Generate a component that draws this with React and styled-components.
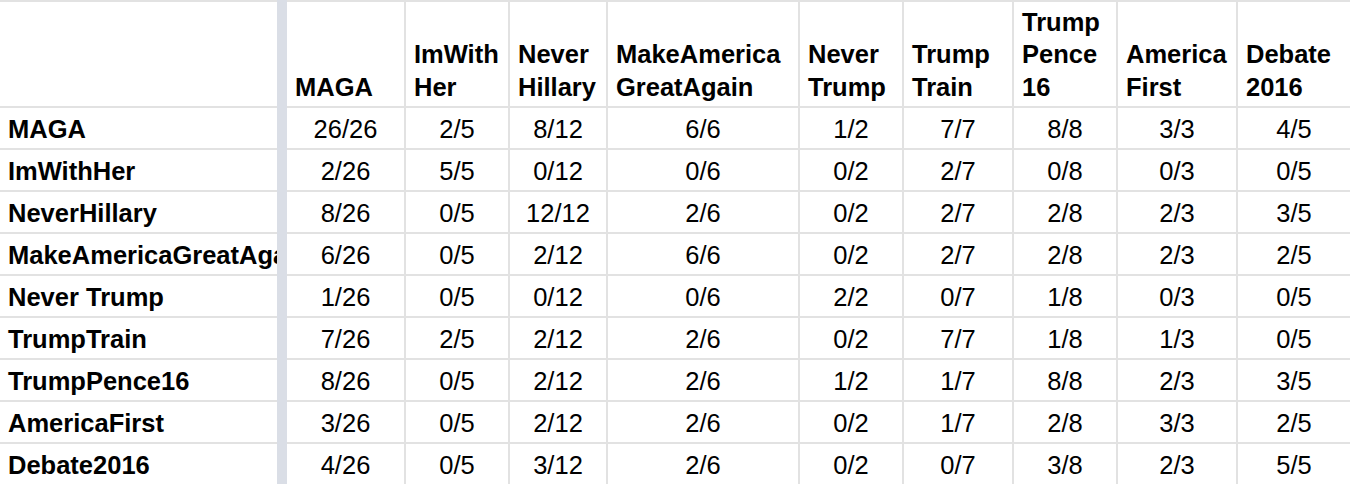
import React from 'react';
import styled, { createGlobalStyle } from 'styled-components';

const GlobalStyle = createGlobalStyle`
  html, body {
    margin: 0;
    padding: 0;
    background: #ffffff;
    overflow: hidden;
  }
  body {
    font-family: 'Liberation Sans', Arial, sans-serif;
    color: #000;
  }
`;

const Sheet = styled.div`
  display: grid;
  grid-template-columns: 277px 6px 117px 102px 96px 190px 102px 108px 102px 118px 1fr;
  grid-template-rows: 104px repeat(9, 40px);
  column-gap: 2px;
  row-gap: 2px;
  padding-top: 2px;
  width: 1350px;
  background: #e2e2e2;
  font-size: 25.5px;
`;

// frozen-column bar, stretched over the gaps on both sides
const FrozenDivider = styled.div`
  grid-column: 2;
  grid-row: 1 / -1;
  margin: -2px -2px 0;
  background: #dadee6;
`;

const Corner = styled.div`
  grid-column: 1;
  background: #fff;
`;

const HeaderCell = styled.div`
  background: #fff;
  display: flex;
  flex-direction: column;
  justify-content: flex-end;
  padding: 0 7px 3px 8px;
  font-weight: bold;
  line-height: 32.5px;
  white-space: nowrap;
  overflow: hidden;
`;

const RowLabel = styled.div`
  grid-column: 1;
  background: #fff;
  display: flex;
  align-items: center;
  padding: 3px 0 0 8px;
  font-weight: bold;
  white-space: nowrap;
  overflow: hidden;
`;

const ValueCell = styled.div`
  background: #fff;
  display: flex;
  align-items: center;
  justify-content: center;
  padding-top: 3px;
  white-space: nowrap;
`;

const columns = [
  ['MAGA'],
  ['ImWith', 'Her'],
  ['Never', 'Hillary'],
  ['MakeAmerica', 'GreatAgain'],
  ['Never', 'Trump'],
  ['Trump', 'Train'],
  ['Trump', 'Pence', '16'],
  ['America', 'First'],
  ['Debate', '2016'],
];

const totals = [26, 5, 12, 6, 2, 7, 8, 3, 5];

const rows = [
  { name: 'MAGA', counts: [26, 2, 8, 6, 1, 7, 8, 3, 4] },
  { name: 'ImWithHer', counts: [2, 5, 0, 0, 0, 2, 0, 0, 0] },
  { name: 'NeverHillary', counts: [8, 0, 12, 2, 0, 2, 2, 2, 3] },
  { name: 'MakeAmericaGreatAgain', counts: [6, 0, 2, 6, 0, 2, 2, 2, 2] },
  { name: 'Never Trump', counts: [1, 0, 0, 0, 2, 0, 1, 0, 0] },
  { name: 'TrumpTrain', counts: [7, 2, 2, 2, 0, 7, 1, 1, 0] },
  { name: 'TrumpPence16', counts: [8, 0, 2, 2, 1, 1, 8, 2, 3] },
  { name: 'AmericaFirst', counts: [3, 0, 2, 2, 0, 1, 2, 3, 2] },
  { name: 'Debate2016', counts: [4, 0, 3, 2, 0, 0, 3, 2, 5] },
];

function App() {
  return (
    <>
      <GlobalStyle />
      <Sheet>
        <Corner />
        <FrozenDivider />
        {columns.map((lines, i) => (
          <HeaderCell key={`h-${i}`}>
            {lines.map((line) => (
              <span key={line}>{line}</span>
            ))}
          </HeaderCell>
        ))}
        {rows.map((row) => (
          <React.Fragment key={row.name}>
            <RowLabel>{row.name}</RowLabel>
            {row.counts.map((count, i) => (
              <ValueCell key={`${row.name}-${i}`}>
                {count}/{totals[i]}
              </ValueCell>
            ))}
          </React.Fragment>
        ))}
      </Sheet>
    </>
  );
}

export default App;
